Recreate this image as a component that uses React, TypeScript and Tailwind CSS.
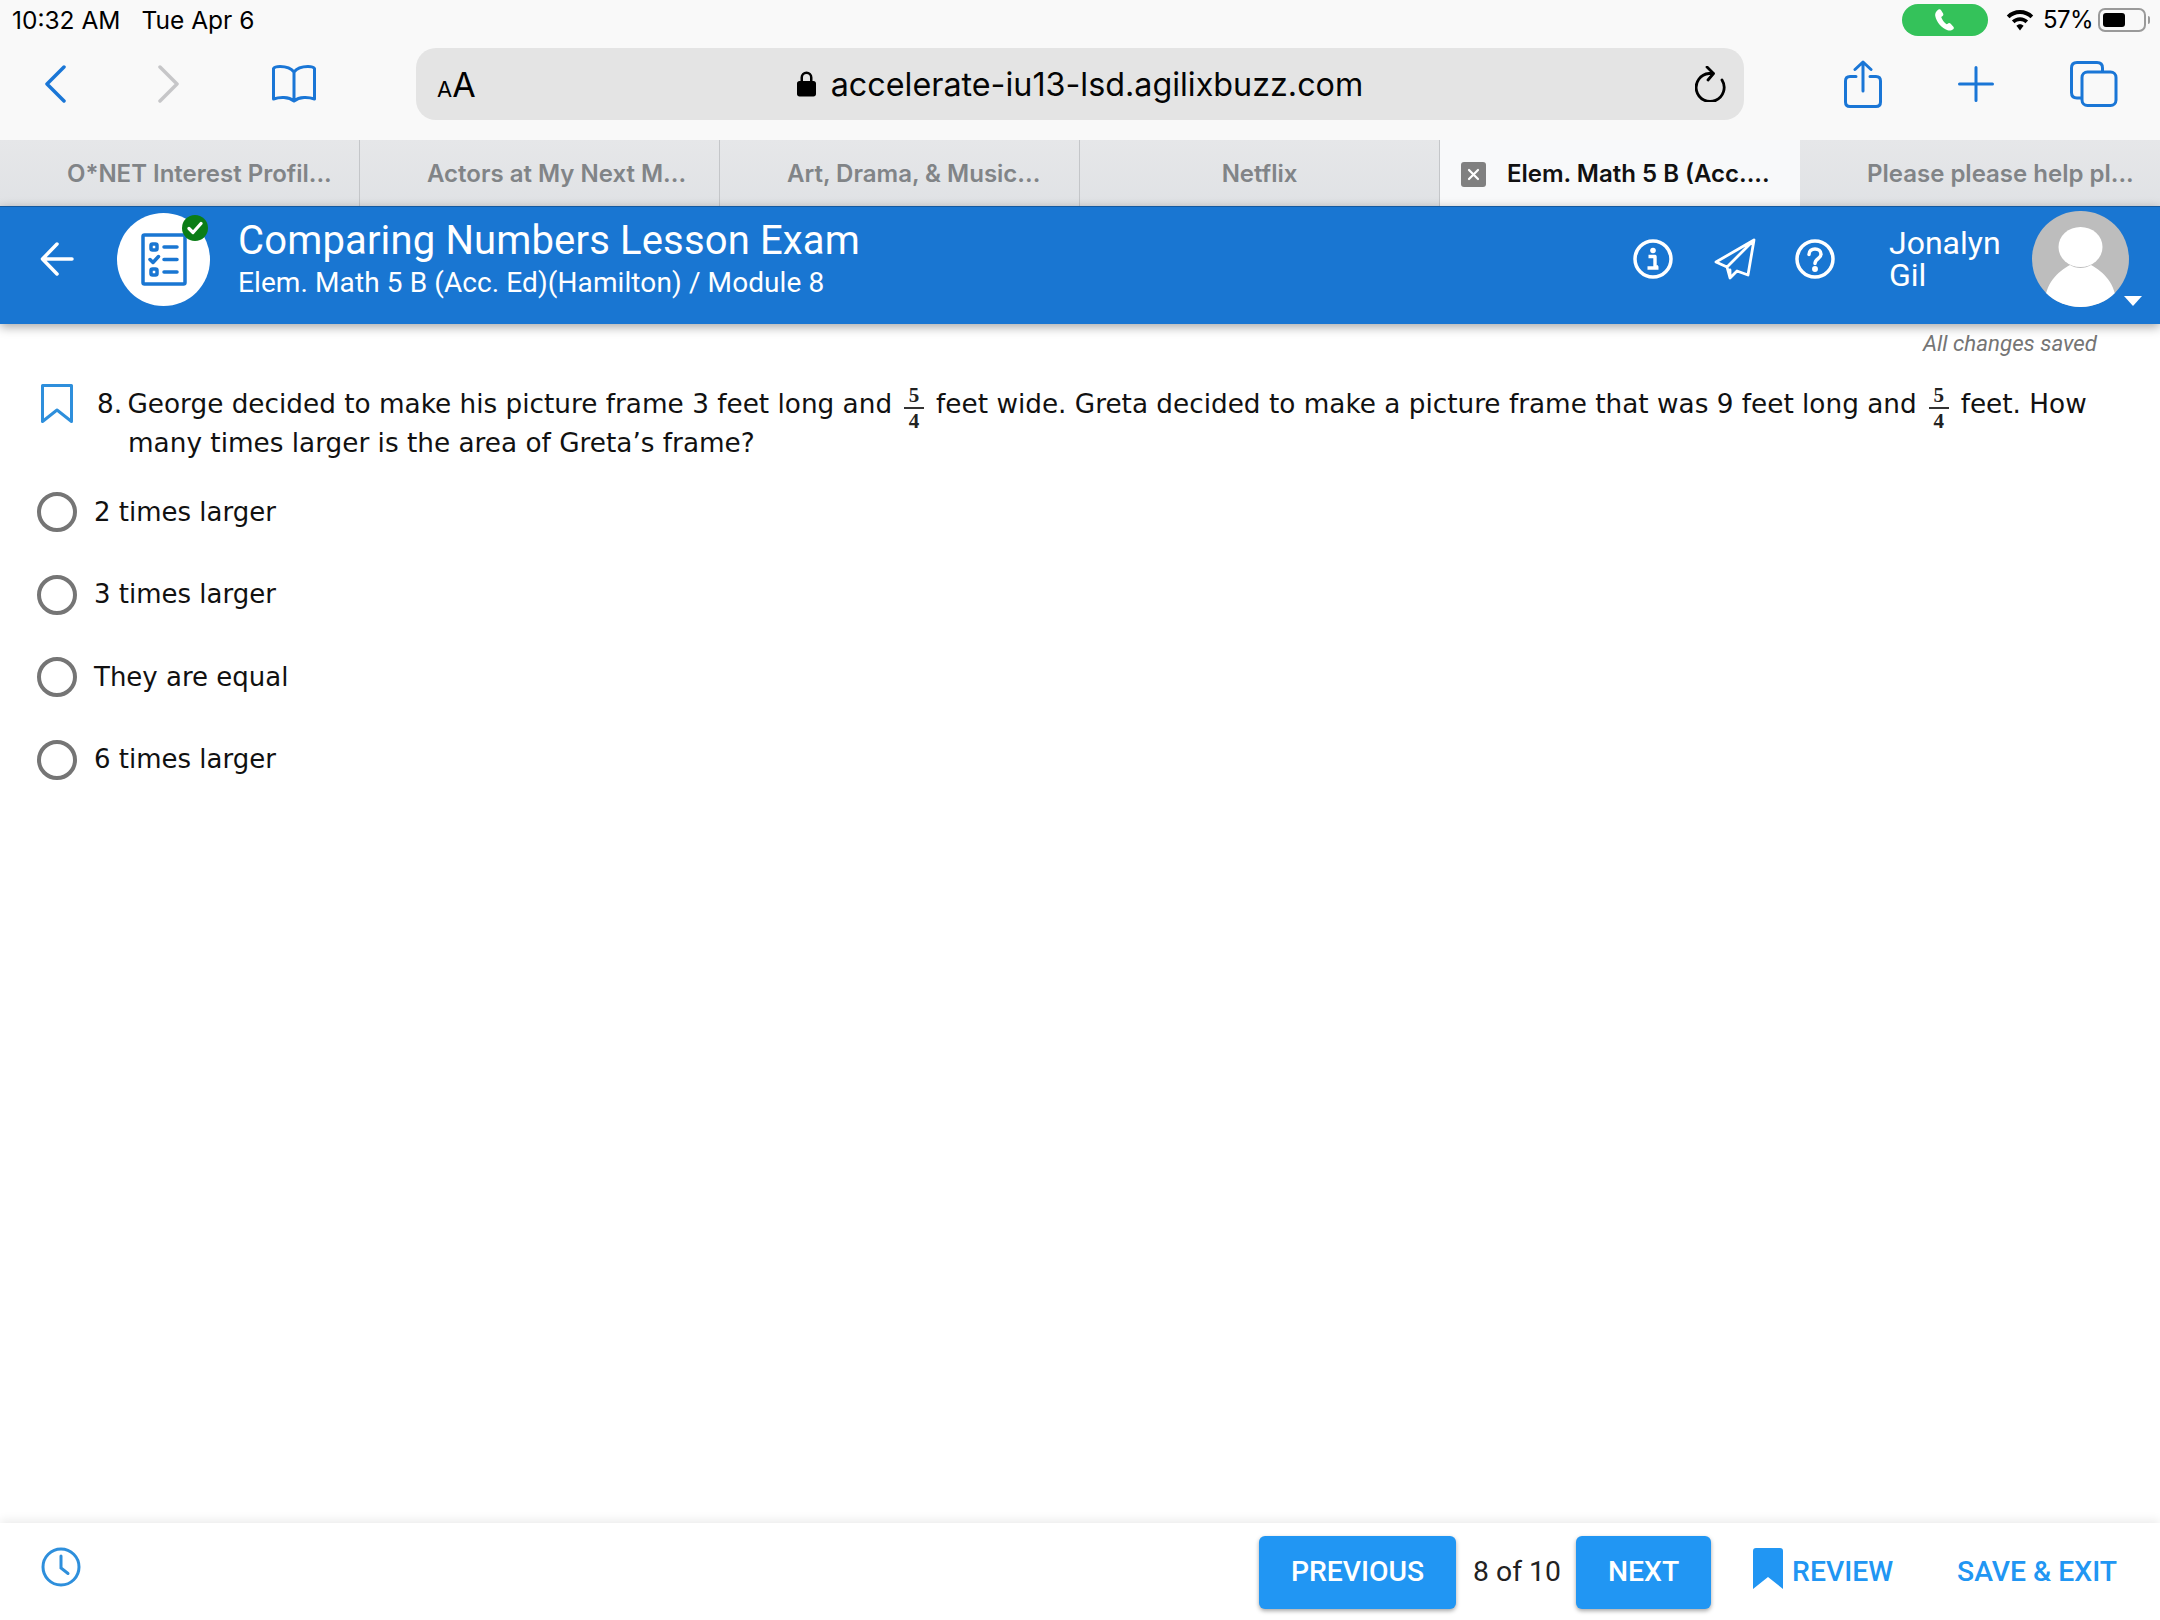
import React from "react";

const OPTIONS = ["2 times larger", "3 times larger", "They are equal", "6 times larger"];

const Fraction = () => (
  <span className="mx-[12px] -my-[12px] inline-flex w-[20px] flex-col items-center align-middle -mt-[8px] font-['Liberation_Serif',serif] text-[21px] leading-[24px] font-bold indent-0 text-[#222]">
    <span className="w-full border-b-2 border-[#333] text-center">5</span>
    <span className="w-full text-center">4</span>
  </span>
);

const Tab = ({ label, center }: { label: string; center?: boolean }) => (
  <div className={`flex w-[360px] items-center border-r border-[#c4c6c9] bg-gradient-to-b from-[#e6e7e9] to-[#e0e2e5] pt-[2px] text-[24px] font-semibold text-[#818487] ${center ? "justify-center" : "pl-[67px]"}`}>
    {label}
  </div>
);

export default function App() {
  return (
    <div className="flex h-[1620px] w-[2160px] flex-col overflow-hidden bg-white font-['Inter',sans-serif]">
      {/* status bar + safari toolbar */}
      <div className="h-[140px] bg-[#f9f9f9]">
        <div className="flex h-[40px] items-center pl-[12px] pr-[10px] text-[24.500px] text-black">
          <span>10:32 AM</span>
          <span className="ml-[21px]">Tue Apr 6</span>
          <div className="ml-auto mr-[-5px] flex h-[32px] w-[86px] items-center justify-center rounded-full bg-[#34c25a]">
            <svg width="24" height="24" viewBox="0 0 24 24" fill="white">
              <path d="M5.5 1.5c1-.6 2-.3 2.6.7l2 3.4c.5.9.3 1.8-.5 2.5l-1.4 1c.9 2.900 2.800 5.500 5.400 7.200l1.600-.9c.9-.5 1.800-.3 2.500.4l2.700 2.900c.7.8.6 1.800-.2 2.500-1.600 1.300-3.600 1.800-5.600 1C8.800 20.500 3.500 14.200 2.200 7.800 1.800 5.300 3.300 2.800 5.500 1.500z" />
            </svg>
          </div>
          <svg className="ml-[23px]" width="28" height="21" viewBox="0 0 28 21" fill="black">
            <path d="M14 0C8.800 0 4.200 2 .8 5.400l2.700 2.800C6.200 5.500 9.900 3.900 14 3.900s7.800 1.600 10.500 4.300l2.700-2.800C23.800 2 19.200 0 14 0z" />
            <path d="M14 7.200c-3.200 0-6 1.300-8.100 3.300l2.700 2.800c1.400-1.400 3.300-2.200 5.400-2.200s4 .8 5.400 2.200l2.700-2.800C20 8.500 17.200 7.200 14 7.200z" />
            <path d="M14 14.300c-1.400 0-2.700.6-3.600 1.500L14 20.500l3.600-4.700c-.9-.9-2.200-1.500-3.600-1.500z" />
          </svg>
          <span className="ml-[9px] text-[24px] tracking-[-0.6px]">57%</span>
          <div className="ml-[5px] flex h-[24px] w-[48px] items-center rounded-[7px] border-2 border-[#9a9a9a] p-[3px]">
            <div className="h-full w-[22px] rounded-[3px] bg-black" />
          </div>
          <div className="ml-[2px] h-[8px] w-[2px] rounded-r bg-[#9a9a9a]" />
        </div>

        <div className="mt-[8px] flex h-[72px] items-center">
          <svg className="ml-[44px]" width="22" height="38" viewBox="0 0 22 38" fill="none" stroke="#1a76d6" strokeWidth="3.500" strokeLinecap="round" strokeLinejoin="round">
            <path d="M20 2 3 19l17 17" />
          </svg>
          <svg className="ml-[92px]" width="22" height="38" viewBox="0 0 22 38" fill="none" stroke="#c6c6c8" strokeWidth="3.500" strokeLinecap="round" strokeLinejoin="round">
            <path d="m2 2 17 17L2 36" />
          </svg>
          <svg className="ml-[92px]" width="44" height="38" viewBox="0 0 44 38" fill="none" stroke="#1a76d6" strokeWidth="3" strokeLinejoin="round">
            <path d="M22 7C19 3 14 1.500 8 1.500 5 1.500 2.500 2 1.500 3.500v30.500c6-2 15-2.500 20.500 2 5.500-4.500 14.500-4 20.500-2V3.500C41.500 2 39 1.500 36 1.500 30 1.500 25 3 22 7zM22 7v29" />
          </svg>
          {/* url bar */}
          <div className="relative ml-[100px] flex h-[72px] w-[1328px] items-center justify-center rounded-[20px] bg-[#e4e4e4]">
            <span className="absolute left-[21px] top-[17px] text-[34px] leading-[40px] text-black"><span className="text-[22px]">A</span>A</span>
            <svg width="19" height="26" viewBox="0 0 19 26" fill="black">
              <path d="M3.500 10V6.500a6 6 0 0 1 12 0V10h1c1.500 0 2.500 1 2.500 2.500V23c0 1.500-1 2.500-2.500 2.500h-14C1 25.500 0 24.500 0 23V12.500C0 11 1 10 2.500 10zm2.500 0h7V6.500a3.500 3.500 0 0 0-7 0z" />
            </svg>
            <span className="ml-[15px] pt-[2px] text-[32.300px] text-[#050505]">accelerate-iu13-lsd.agilixbuzz.com</span>
            <svg className="absolute right-[17px] top-[18px]" width="32" height="36" viewBox="0 0 32 36" fill="none" stroke="black" strokeWidth="2.800" strokeLinecap="round" strokeLinejoin="round">
              <path d="M27 14a14 14 0 1 1-13-6.500h4" />
              <path d="m12 1 6.500 6.500L13 14" />
            </svg>
          </div>
          <svg className="ml-[100px]" width="38" height="48" viewBox="0 0 38 48" fill="none" stroke="#1a76d6" strokeWidth="3" strokeLinecap="round" strokeLinejoin="round">
            <path d="M12 16.500H6c-3 0-4.500 1.500-4.500 4.500v21c0 3 1.500 4.500 4.500 4.500h26c3 0 4.500-1.500 4.500-4.500V21c0-3-1.500-4.500-4.500-4.500h-6" />
            <path d="M19 31V2M11 9.500 19 2l8 7.500" />
          </svg>
          <svg className="ml-[76px]" width="36" height="36" viewBox="0 0 36 36" fill="none" stroke="#1a76d6" strokeWidth="3" strokeLinecap="round">
            <path d="M18 1.500v33M1.500 18h33" />
          </svg>
          <svg className="ml-[76px]" width="48" height="46" viewBox="0 0 48 46" fill="none" stroke="#1a76d6" strokeWidth="3" strokeLinejoin="round">
            <path d="M11 37H7c-3.500 0-5.500-2-5.500-5.500V7C1.500 3.500 3.500 1.500 7 1.500h20c3.500 0 5.500 2 5.500 5.500v4" />
            <rect x="12" y="11" width="34" height="33.500" rx="5.500" />
          </svg>
        </div>
      </div>

      {/* tabs */}
      <div className="flex h-[66px]">
        <Tab label="O*NET Interest Profil..." />
        <Tab label="Actors at My Next M..." />
        <Tab label="Art, Drama, & Music..." />
        <Tab label="Netflix" center />
        <div className="flex w-[360px] items-center bg-[#f8f9fa] pl-[21px] pt-[2px] text-[24px] font-semibold text-[#111]">
          <div className="flex h-[25px] w-[25px] items-center justify-center rounded-[3px] bg-[#808080]">
            <svg width="13" height="13" viewBox="0 0 13 13" stroke="white" strokeWidth="2.200" strokeLinecap="round">
              <path d="m2 2 9 9M11 2l-9 9" />
            </svg>
          </div>
          <span className="ml-[21px]">Elem. Math 5 B (Acc....</span>
        </div>
        <div className="flex w-[360px] items-center bg-gradient-to-b from-[#e6e7e9] to-[#e0e2e5] pl-[67px] pt-[2px] text-[24px] font-semibold text-[#818487]">
          Please please help pl...
        </div>
      </div>

      {/* lesson header */}
      <div className="relative z-10 flex h-[118px] items-center border-t border-[#14599f] bg-[#1976d2] pb-[13px] font-['Roboto',sans-serif] text-white shadow-[0_3px_10px_rgba(0,0,0,0.35)]">
        <svg className="ml-[40px]" width="34" height="34" viewBox="0 0 34 34" fill="none" stroke="white" strokeWidth="3.500" strokeLinecap="round" strokeLinejoin="round">
          <path d="M32 17H3M17 2 2.500 17 17 32" />
        </svg>
        <div className="relative ml-[43px] flex h-[93px] w-[93px] items-center justify-center rounded-full bg-white">
          <svg width="46" height="53" viewBox="0 0 46 53" fill="none" stroke="#1976d2" strokeWidth="3.500" strokeLinecap="round" strokeLinejoin="round">
            <rect x="2" y="2" width="42" height="49" rx="1.500" />
            <rect x="10" y="11" width="6" height="6" rx="1.500" />
            <rect x="10" y="36" width="6" height="6" rx="1.500" />
            <path d="M9 26.500l3 3 5.500-6M23 14h13M23 26.500h13M23 39h13" />
          </svg>
          <div className="absolute right-[2px] top-[2px] flex h-[26px] w-[26px] items-center justify-center rounded-full bg-[#0b7d17]">
            <svg width="16" height="14" viewBox="0 0 16 14" fill="none" stroke="white" strokeWidth="3.200" strokeLinecap="round" strokeLinejoin="round">
              <path d="m2 7.500 4 4L14 2.500" />
            </svg>
          </div>
        </div>
        <div className="ml-[28px] flex flex-col">
          <span className="text-[40px] leading-[46px] tracking-[0.15px]">Comparing Numbers Lesson Exam</span>
          <span className="mt-[1px] text-[28px] leading-[36px] tracking-[0.1px]">Elem. Math 5 B (Acc. Ed)(Hamilton) / Module 8</span>
        </div>
        <div className="ml-auto flex items-center">
          <svg width="40" height="40" viewBox="0 0 40 40" fill="none" stroke="white">
            <circle cx="20" cy="20" r="18" strokeWidth="3.500" />
            <circle cx="20" cy="11.500" r="2.800" fill="white" stroke="none" />
            <path d="M15.500 17.500H22V28h3M14.500 29h11" strokeWidth="3.400" strokeLinejoin="round" />
          </svg>
          <svg className="ml-[41px]" width="42" height="42" viewBox="0 0 42 42" fill="none" stroke="white" strokeWidth="2.800" strokeLinejoin="round" strokeLinecap="round">
            <path d="M40 2 2 24l11 5 3 11 7-7 11 4zM40 2 13 29M16 40v-8" />
          </svg>
          <svg className="ml-[39px]" width="40" height="40" viewBox="0 0 40 40" fill="none" stroke="white" strokeWidth="3.500" strokeLinecap="round">
            <circle cx="20" cy="20" r="18" />
            <path d="M14 15.500c0-3.500 2.700-5.500 6-5.500s6 2 6 5.200c0 4.300-6 4.600-6 9.300" />
            <circle cx="20" cy="30" r="1.200" fill="white" />
          </svg>
        </div>
        <div className="ml-[54px] w-[111px] text-[32px] leading-[32px]">
          Jonalyn
          <br />
          Gil
        </div>
        <div className="relative ml-[32px] mr-[31px] h-[96px] w-[97px] overflow-hidden rounded-full bg-[#bdbdbd]">
          <svg width="97" height="96" viewBox="0 0 97 96" fill="white">
            <ellipse cx="48.500" cy="36" rx="22" ry="20" />
            <path d="M38 54c-12 7-25 17-26 42h73c-1-25-14-35-26-42-6 4-15 4-21 0z" />
          </svg>
        </div>
        <div className="absolute right-[18px] top-[89px] h-0 w-0 border-x-[9px] border-t-[10px] border-x-transparent border-t-white" />
      </div>

      {/* question */}
      <div className="relative flex-1">
        <p className="mr-[63px] mt-[6px] text-right font-['Roboto',sans-serif] text-[22.300px] italic leading-[26px] text-[#757575]">All changes saved</p>
        <div className="mt-[29px] flex pl-[41px] font-['DejaVu_Sans',sans-serif] text-[26.300px] leading-[38.500px] text-[#111]">
          <svg className="-mt-[1px] shrink-0" width="32" height="40" viewBox="0 0 32 40" fill="none" stroke="#2e8fdc" strokeWidth="3" strokeLinejoin="round">
            <path d="M1.500 1.500h29v36L16 26 1.500 37.500z" />
          </svg>
          <p className="ml-[55px] -indent-[31px] whitespace-nowrap">
            <span className="-mr-[3px]">8.</span> George decided to make his picture frame 3 feet long and
            <Fraction />
            feet wide. Greta decided to make a picture frame that was 9 feet long and
            <Fraction />
            feet. How
            <br />
            many times larger is the area of Greta’s frame?
          </p>
        </div>
        <div className="mt-[30px] flex flex-col gap-[42.500px] pl-[37px]">
          {OPTIONS.map((o) => (
            <div key={o} className="flex h-[40px] items-center">
              <div className="h-[40px] w-[40px] rounded-full border-[4.500px] border-[#757575]" />
              <span className="ml-[17px] font-['DejaVu_Sans',sans-serif] text-[26px] text-[#111]">{o}</span>
            </div>
          ))}
        </div>
      </div>

      {/* footer */}
      <div className="z-10 flex h-[97px] items-center bg-white pl-[41px] font-['Roboto',sans-serif] shadow-[0_-3px_9px_rgba(0,0,0,0.08)]">
        <svg className="-mt-[9px]" width="40" height="40" viewBox="0 0 40 40" fill="none" stroke="#2e8fdc" strokeWidth="3" strokeLinecap="round">
          <circle cx="20" cy="20" r="18" />
          <path d="M20 9v12l7 5.500" />
        </svg>
        <div className="ml-auto flex items-center pr-[43px] pt-[2px] text-[28.300px] font-medium">
          <button className="h-[73px] w-[197px] rounded-[6px] bg-[#2196f3] text-white shadow-[0_2px_4px_rgba(0,0,0,0.35)]">PREVIOUS</button>
          <span className="ml-[17px] w-[103px] font-normal text-[#222]">8 of 10</span>
          <button className="h-[73px] w-[135px] rounded-[6px] bg-[#2196f3] text-white shadow-[0_2px_4px_rgba(0,0,0,0.35)]">NEXT</button>
          <svg className="-mt-[8px] ml-[42px]" width="30" height="41" viewBox="0 0 30 41" fill="#2196f3">
            <path d="M0 3C0 1 1 0 3 0h24c2 0 3 1 3 3v38L15 29 0 41z" />
          </svg>
          <span className="ml-[9px] text-[#2196f3]">REVIEW</span>
          <span className="ml-[64px] text-[#2196f3]">SAVE &amp; EXIT</span>
        </div>
      </div>
    </div>
  );
}
